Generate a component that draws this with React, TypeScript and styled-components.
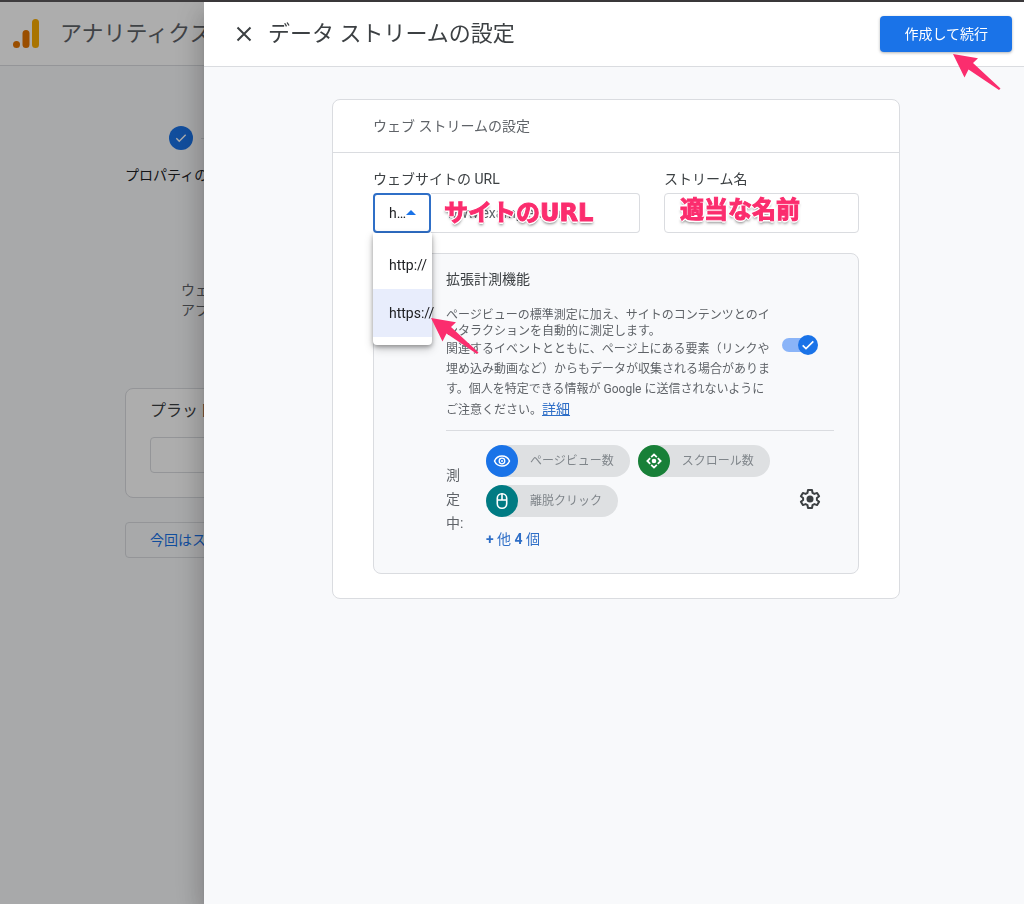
import React from 'react';
import styled, { createGlobalStyle } from 'styled-components';

const colors = {
  blue: '#1a73e8',
  link: '#2f6fc7',
  ink: '#3c4043',
  muted: '#5f6368',
  line: '#dadce0',
  surface: '#f8f9fb',
  pink: '#fb2d6e',
};

const GlobalStyle = createGlobalStyle`
  *, *::before, *::after { box-sizing: border-box; }
  body {
    margin: 0;
    background: ${colors.surface};
    color: ${colors.ink};
    font-family: Roboto, "Noto Sans CJK JP", sans-serif;
    font-size: 14px;
    line-height: 20px;
  }
  h1, h2, h3, p, ul { margin: 0; padding: 0; font-weight: 400; }
  button, input, select { font: inherit; color: inherit; }
`;

/* ---------- page behind the drawer ---------- */

const Shell = styled.div`
  min-height: 100vh;
  overflow: hidden;
  border-top: 2px solid #3e3c3e;
`;

const AppBar = styled.header`
  display: flex;
  align-items: center;
  gap: 20px;
  height: 64px;
  padding: 0 12px;
  background: #fff;
  border-bottom: 1px solid ${colors.line};
`;

const Brand = styled.span`
  color: ${colors.muted};
  font-size: 22px;
  line-height: 32px;
  white-space: nowrap;
`;

const Setup = styled.main`
  display: flex;
  flex-direction: column;
  padding: 60px 125px;
`;

const Step = styled.div`
  display: flex;
  flex-direction: column;
  align-items: center;
  gap: 15px;
  width: 112px;
`;

const StepTop = styled.div`
  display: flex;
  align-items: center;
  gap: 8px;
  align-self: stretch;
  padding-left: 44px;
  white-space: nowrap;
`;

const StepDot = styled.span`
  display: flex;
  flex: none;
  align-items: center;
  justify-content: center;
  width: 24px;
  height: 24px;
  border-radius: 50%;
  background: ${colors.blue};
`;

const StepLine = styled.span`
  flex: 1;
  height: 1px;
  background: ${colors.line};
`;

const StepLabel = styled.span`
  align-self: flex-start;
  white-space: nowrap;
  color: #202124;
`;

const Lead = styled.p`
  margin-top: 95px;
  padding-left: 56px;
  color: ${colors.muted};
`;

const PlatformCard = styled.section`
  margin-top: 68px;
  padding: 12px 24px 24px;
  background: #fff;
  border: 1px solid ${colors.line};
  border-radius: 8px;
`;

const PlatformTitle = styled.h2`
  margin-bottom: 16px;
  font-size: 16px;
  line-height: 20px;
`;

const PlatformField = styled.div`
  height: 36px;
  border: 1px solid ${colors.line};
  border-radius: 4px;
`;

const SkipButton = styled.button`
  align-self: stretch;
  height: 36px;
  margin-top: 24px;
  padding: 0 24px;
  background: none;
  border: 1px solid ${colors.line};
  border-radius: 4px;
  color: ${colors.blue};
  text-align: left;
`;

const Scrim = styled.div`
  position: fixed;
  inset: 2px 0 0;
  background: rgba(0, 0, 0, 0.32);
`;

/* ---------- drawer ---------- */

const Drawer = styled.section`
  position: fixed;
  inset: 2px 0 0 204px;
  overflow: auto;
  background: ${colors.surface};
  box-shadow: 0 8px 10px -5px rgba(0, 0, 0, 0.2), 0 16px 24px 2px rgba(0, 0, 0, 0.14),
    0 6px 30px 5px rgba(0, 0, 0, 0.12);
`;

const DrawerBar = styled.header`
  display: flex;
  align-items: center;
  gap: 12px;
  height: 65px;
  padding: 0 12px 0 28px;
  background: #fff;
  border-bottom: 1px solid ${colors.line};
`;

const IconButton = styled.button`
  display: flex;
  flex: none;
  align-items: center;
  justify-content: center;
  width: 24px;
  height: 24px;
  padding: 0;
  background: none;
  border: 0;
`;

const DrawerTitle = styled.h1`
  flex: 1;
  font-size: 22px;
  line-height: 32px;
`;

const Anchor = styled.div`
  position: relative;
`;

const PrimaryButton = styled.button`
  height: 36px;
  padding: 0 24px;
  background: ${colors.blue};
  border: 0;
  border-radius: 4px;
  box-shadow: 0 1px 3px rgba(60, 64, 67, 0.4);
  color: #fff;
`;

const ArrowMark = styled.svg<{ $x: number; $y: number }>`
  position: absolute;
  z-index: 3;
  left: ${(p) => p.$x}px;
  top: ${(p) => p.$y}px;
  pointer-events: none;
`;

const DrawerBody = styled.div`
  padding: 32px 124px 32px 128px;
`;

const Card = styled.section`
  background: #fff;
  border: 1px solid ${colors.line};
  border-radius: 8px;
`;

const CardHead = styled.h2`
  padding: 16px 40px;
  border-bottom: 1px solid ${colors.line};
  color: ${colors.muted};
  font-size: 14px;
  line-height: 20px;
`;

const CardBody = styled.div`
  display: flex;
  flex-direction: column;
  gap: 20px;
  padding: 16px 40px 24px;
`;

const Fields = styled.div`
  display: grid;
  grid-template-columns: minmax(0, 267fr) minmax(0, 195fr);
  gap: 24px;
`;

const Field = styled.div`
  display: flex;
  flex-direction: column;
  gap: 4px;
`;

const UrlControl = styled.div`
  position: relative;
  display: flex;
`;

const SchemeSelect = styled.select`
  appearance: none;
  width: 58px;
  height: 40px;
  padding: 0 22px 0 14px;
  background: #fff;
  border: 2px solid ${colors.link};
  border-radius: 4px;
  outline: 0;
  color: #202124;
  text-overflow: ellipsis;
  white-space: nowrap;
  overflow: hidden;
`;

const Caret = styled.span`
  position: absolute;
  left: 33px;
  top: 17px;
  border: 5px solid transparent;
  border-top-width: 0;
  border-bottom-color: ${colors.blue};
  pointer-events: none;
`;

const TextInput = styled.input<{ $joined?: boolean }>`
  flex: 1;
  width: 100%;
  min-width: 0;
  height: 40px;
  padding: 0 16px;
  background: #fff;
  border: 1px solid ${colors.line};
  border-left-width: ${(p) => (p.$joined ? 0 : 1)}px;
  border-radius: ${(p) => (p.$joined ? '0 4px 4px 0' : '4px')};
  &::placeholder { color: ${colors.muted}; opacity: 1; }
`;

const Note = styled.span<{ $x: number; $y: number }>`
  position: absolute;
  left: ${(p) => p.$x}px;
  top: ${(p) => p.$y}px;
  color: ${colors.pink};
  font-family: "DejaVu Sans", "Noto Sans CJK JP", sans-serif;
  font-size: 24px;
  font-weight: 700;
  line-height: 32px;
  white-space: nowrap;
  pointer-events: none;
  -webkit-text-stroke: 1px ${colors.pink};
  text-shadow: 2px 0 #fff, -2px 0 #fff, 0 2px #fff, 0 -2px #fff, 1px 1px #fff, -1px -1px #fff,
    1px -1px #fff, -1px 1px #fff, 0 3px 3px rgba(0, 0, 0, 0.5);
`;

const Menu = styled.ul`
  position: absolute;
  z-index: 2;
  left: 0;
  top: 40px;
  width: 59px;
  padding: 8px 0;
  background: #fff;
  border-radius: 0 0 4px 4px;
  box-shadow: 0 2px 4px rgba(0, 0, 0, 0.3), 0 4px 10px rgba(0, 0, 0, 0.2);
  list-style: none;
`;

const MenuItem = styled.li<{ $active?: boolean }>`
  height: 48px;
  padding-left: 16px;
  background: ${(p) => (p.$active ? '#e8edfc' : '#fff')};
  color: #202124;
  line-height: 48px;
  white-space: nowrap;
`;

const Enhanced = styled.section`
  padding: 15px 24px 20px 72px;
  background: ${colors.surface};
  border: 1px solid ${colors.line};
  border-radius: 8px;
`;

const EnhancedTop = styled.div`
  display: flex;
  align-items: center;
  justify-content: space-between;
  padding: 0 16px 10px 0;
  border-bottom: 1px solid ${colors.line};
`;

const Copy = styled.div`
  width: 332px;
  color: ${colors.muted};
  font-size: 12px;
`;

const EnhancedTitle = styled.h3`
  margin-bottom: 18px;
  color: ${colors.ink};
  font-size: 14px;
  line-height: 20px;
`;

const Intro = styled.p`
  line-height: 16px;
`;

const Detail = styled.p`
  line-height: 20px;
`;

const DetailLink = styled.a`
  color: ${colors.link};
  font-size: 14px;
`;

const Toggle = styled.label`
  position: relative;
  display: flex;
  align-items: center;
  width: 36px;
  height: 20px;
`;

const ToggleInput = styled.input`
  appearance: none;
  width: 28px;
  height: 14px;
  margin: 0;
  border-radius: 7px;
  background: #8ab4f8;
`;

const ToggleThumb = styled.span`
  position: absolute;
  right: 0;
  top: 0;
  display: flex;
  align-items: center;
  justify-content: center;
  width: 20px;
  height: 20px;
  border-radius: 50%;
  background: ${colors.blue};
`;

const Measuring = styled.div`
  display: flex;
  align-items: center;
  gap: 20px;
  padding: 14px 12px 0 0;
`;

const MeasuringLabel = styled.span`
  width: 20px;
  color: ${colors.muted};
  line-height: 24px;
`;

const Events = styled.div`
  display: flex;
  flex: 1;
  flex-direction: column;
  align-items: flex-start;
  gap: 8px;
`;

const Chips = styled.div`
  display: flex;
  flex-wrap: wrap;
  gap: 8px;
`;

const Chip = styled.span`
  display: flex;
  align-items: center;
  gap: 12px;
  height: 32px;
  padding-right: 16px;
  border-radius: 16px;
  background: #dee0e2;
  color: #80868b;
  font-size: 12px;
`;

const ChipIcon = styled.span<{ $color: string }>`
  display: flex;
  align-items: center;
  justify-content: center;
  width: 32px;
  height: 32px;
  border-radius: 50%;
  background: ${(p) => p.$color};
`;

const MoreButton = styled.button`
  height: 28px;
  padding: 0;
  background: none;
  border: 0;
  color: ${colors.link};
`;

function CheckIcon({ size }: { size: number }) {
  return (
    <svg width={size} height={size} viewBox="0 0 24 24" fill="none" stroke="#fff" strokeWidth="2.4">
      <path d="M4 12.5l5 5L20 6.5" />
    </svg>
  );
}

function LogoIcon() {
  return (
    <svg width="28" height="30" viewBox="0 0 28 30">
      <rect x="20" y="0" width="7" height="29" rx="3.5" fill="#f9ab00" />
      <rect x="10.5" y="11" width="7" height="18" rx="3.5" fill="#e37400" />
      <circle cx="4.5" cy="25.5" r="3.5" fill="#e37400" />
    </svg>
  );
}

function CloseIcon() {
  return (
    <svg width="24" height="24" viewBox="0 0 24 24" stroke="#3c4043" strokeWidth="2">
      <path d="M5.5 5.5l13 13M18.5 5.5l-13 13" />
    </svg>
  );
}

function EyeIcon() {
  return (
    <svg width="18" height="18" viewBox="0 0 18 18" fill="none" stroke="#fff" strokeWidth="1.5">
      <path d="M1.5 9C3 5.6 5.8 4 9 4s6 1.6 7.5 5C15 12.4 12.2 14 9 14S3 12.4 1.5 9z" />
      <circle cx="9" cy="9" r="2.8" strokeWidth="1.3" />
      <circle cx="9" cy="9" r="1" fill="#fff" stroke="none" />
    </svg>
  );
}

function ScrollIcon() {
  return (
    <svg width="18" height="18" viewBox="0 0 18 18" fill="none" stroke="#fff" strokeWidth="1.8">
      <path d="M6.2 5.2L9 2.400l2.800 2.800M6.200 12.800L9 15.600l2.800-2.800M5.200 6.200L2.400 9l2.800 2.800M12.800 6.200L15.600 9l-2.800 2.800" />
      <circle cx="9" cy="9" r="2.3" fill="#fff" stroke="none" />
    </svg>
  );
}

function MouseIcon() {
  return (
    <svg width="18" height="18" viewBox="0 0 18 18" fill="none" stroke="#fff" strokeWidth="1.6">
      <rect x="4.3" y="1.8" width="9.4" height="14.4" rx="4.5" />
      <path d="M4.3 8h9.4M9 1.800V8" />
    </svg>
  );
}

function GearIcon() {
  return (
    <svg width="24" height="24" viewBox="0 0 24 24" fill="none" stroke="#3c4043" strokeWidth="2">
      <path
        strokeLinejoin="round"
        d="M10 3h4l.5 2.800 1.900 1.100 2.700-1 2 3.400-2.200 1.800v1.800l2.200 1.800-2 3.400-2.700-1-1.900 1.100L14 21h-4l-.5-2.800-1.900-1.100-2.700 1-2-3.400 2.200-1.800v-1.800L2.900 9.300l2-3.400 2.700 1 1.900-1.100z"
      />
      <circle cx="12" cy="12" r="3.5" fill="#3c4043" stroke="none" />
    </svg>
  );
}

function Arrow({ x, y }: { x: number; y: number }) {
  return (
    <ArrowMark $x={x} $y={y} width="48" height="37" viewBox="0 0 48 37" aria-hidden="true">
      <path d="M0 0L25 4.300 20 9 47.500 34.500 46 36 15.500 15.500 11.500 23.500z" fill={colors.pink} />
    </ArrowMark>
  );
}

const chips = [
  { label: 'ページビュー数', color: '#1a73e8', icon: <EyeIcon /> },
  { label: 'スクロール数', color: '#188038', icon: <ScrollIcon /> },
  { label: '離脱クリック', color: '#007b83', icon: <MouseIcon /> },
];

export default function App() {
  return (
    <Shell lang="ja">
      <GlobalStyle />
      <AppBar>
        <LogoIcon />
        <Brand>アナリティクス</Brand>
      </AppBar>
      <Setup>
        <Step>
          <StepTop>
            <StepDot>
              <CheckIcon size={14} />
            </StepDot>
            <StepLine />
          </StepTop>
          <StepLabel>プロパティの</StepLabel>
        </Step>
        <Lead>
          ウェ
          <br />
          アプ
        </Lead>
        <PlatformCard>
          <PlatformTitle>プラット</PlatformTitle>
          <PlatformField />
        </PlatformCard>
        <SkipButton type="button">今回はス</SkipButton>
      </Setup>
      <Scrim />

      <Drawer role="dialog" aria-labelledby="drawer-title">
        <DrawerBar>
          <IconButton type="button" aria-label="閉じる">
            <CloseIcon />
          </IconButton>
          <DrawerTitle id="drawer-title">データ ストリームの設定</DrawerTitle>
          <Anchor>
            <PrimaryButton type="button">作成して続行</PrimaryButton>
            <Arrow x={73} y={38} />
          </Anchor>
        </DrawerBar>

        <DrawerBody>
          <Card>
            <CardHead>ウェブ ストリームの設定</CardHead>
            <CardBody>
              <Fields>
                <Field>
                  <label htmlFor="site-url">ウェブサイトの URL</label>
                  <UrlControl>
                    <SchemeSelect aria-label="プロトコル" defaultValue="https">
                      <option value="http">http://</option>
                      <option value="https">https://</option>
                    </SchemeSelect>
                    <Caret />
                    <TextInput id="site-url" type="text" placeholder="www.example.com" $joined />
                    <Note $x={71} $y={4}>サイトのURL</Note>
                    <Menu role="listbox" aria-label="プロトコル">
                      <MenuItem role="option" aria-selected={false}>http://</MenuItem>
                      <MenuItem role="option" aria-selected $active>https://</MenuItem>
                    </Menu>
                    <Arrow x={58} y={125} />
                  </UrlControl>
                </Field>
                <Field>
                  <label htmlFor="stream-name">ストリーム名</label>
                  <UrlControl>
                    <TextInput id="stream-name" type="text" />
                    <Note $x={16} $y={1}>適当な名前</Note>
                  </UrlControl>
                </Field>
              </Fields>

              <Enhanced>
                <EnhancedTop>
                  <Copy>
                    <EnhancedTitle id="enhanced-title">拡張計測機能</EnhancedTitle>
                    <Intro>
                      ページビューの標準測定に加え、サイトのコンテンツとのインタラクションを自動的に測定します。
                    </Intro>
                    <Detail>
                      関連するイベントとともに、ページ上にある要素（リンクや埋め込み動画など）からもデータが収集される場合があります。個人を特定できる情報が Google に送信されないように
                      <br />
                      ご注意ください。
                      <DetailLink href="#details">詳細</DetailLink>
                    </Detail>
                  </Copy>
                  <Toggle>
                    <ToggleInput type="checkbox" defaultChecked aria-labelledby="enhanced-title" />
                    <ToggleThumb>
                      <CheckIcon size={16} />
                    </ToggleThumb>
                  </Toggle>
                </EnhancedTop>
                <Measuring>
                  <MeasuringLabel>測定中:</MeasuringLabel>
                  <Events>
                    <Chips>
                      {chips.map((chip) => (
                        <Chip key={chip.label}>
                          <ChipIcon $color={chip.color}>{chip.icon}</ChipIcon>
                          {chip.label}
                        </Chip>
                      ))}
                    </Chips>
                    <MoreButton type="button">
                      <b>+</b> 他 <b>4</b> 個
                    </MoreButton>
                  </Events>
                  <IconButton type="button" aria-label="設定">
                    <GearIcon />
                  </IconButton>
                </Measuring>
              </Enhanced>
            </CardBody>
          </Card>
        </DrawerBody>
      </Drawer>
    </Shell>
  );
}
